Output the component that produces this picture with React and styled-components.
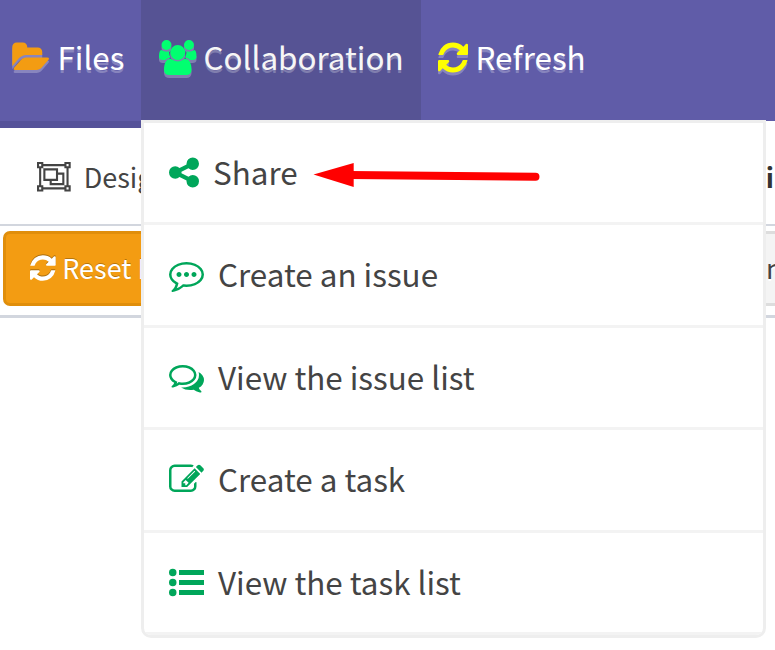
import React from "react";
import styled, { createGlobalStyle } from "styled-components";

const GlobalStyle = createGlobalStyle`
  * { box-sizing: border-box; }
  body { margin: 0; background: #fff; overflow: hidden; }
`;

const Page = styled.div`
  position: relative;
  width: 775px;
  height: 650px;
  overflow: hidden;
  background: #fff;
  color: #444;
  font-family: "Noto Sans CJK SC", "Open Sans", sans-serif;
`;

const NavBar = styled.nav`
  display: flex;
  height: 121px;
  background: #605ca8;
`;

const NavItem = styled.a`
  display: flex;
  align-items: flex-start;
  flex: none;
  width: ${(p) => p.$width}px;
  height: ${(p) => (p.$underline ? 128 : 121)}px;
  padding: 40px 0 0 ${(p) => p.$inset}px;
  gap: ${(p) => p.$gap}px;
  background: ${(p) => (p.$active ? "#565394" : "#605ca8")};
  border-bottom: ${(p) => (p.$underline ? "7px solid #555299" : "0")};
  color: ${(p) => (p.$active ? "#f6f6f6" : "#fff")};
  font-size: 31.4px;
  line-height: 33px;
  white-space: nowrap;
  text-shadow: 0 3px 0 rgba(255, 255, 255, 0.25);
  svg { filter: drop-shadow(0 3px 0 rgba(255, 255, 255, 0.25)); }
`;

const Glyph = styled.svg`
  display: block;
  flex: none;
  width: ${(p) => p.$w}px;
  height: ${(p) => p.$h}px;
  color: ${(p) => p.$color};
  fill: currentColor;
  overflow: visible;
`;

const TabRow = styled.div`
  display: flex;
  justify-content: space-between;
  height: 105px;
  padding: 41px 1px 0 37px;
  border-bottom: 2px solid #d2d6de;
`;

const Tab = styled.div`
  display: flex;
  gap: 13px;
  font-size: 27px;
  font-weight: ${(p) => (p.$bold ? 700 : 400)};
  color: ${(p) => (p.$bold ? "#333" : "#444")};
  line-height: 30px;
`;

const ActionRow = styled.div`
  display: flex;
  justify-content: space-between;
  height: 92px;
  padding: 5px 0 0 3px;
  border-bottom: 3px solid #d2d6de;
`;

const Button = styled.button`
  display: flex;
  align-items: flex-start;
  gap: 7px;
  width: ${(p) => p.$width}px;
  height: 75px;
  padding: 19px 0 0 ${(p) => p.$inset}px;
  border: 3px solid ${(p) => (p.$warning ? "#e08e0b" : "#ddd")};
  border-right-width: ${(p) => (p.$warning ? 3 : 0)}px;
  border-radius: ${(p) => (p.$warning ? "7px" : "7px 0 0 7px")};
  background: ${(p) => (p.$warning ? "#f39c12" : "#f4f4f4")};
  color: ${(p) => (p.$warning ? "#fff" : "#444")};
  font: 400 27px/30px "Noto Sans CJK SC", "Open Sans", sans-serif;
  white-space: nowrap;
  text-shadow: ${(p) => (p.$warning ? "0 -1px 0 rgba(0,0,0,.25)" : "0 2px 0 #fff")};
  svg { filter: drop-shadow(0 -1px 0 rgba(0, 0, 0, 0.3)); }
`;

const Menu = styled.ul`
  position: absolute;
  left: 141px;
  top: 120px;
  width: 625px;
  height: 518px;
  margin: 0;
  padding: 0;
  display: grid;
  grid-template-rows: repeat(5, 102.4px);
  list-style: none;
  background: #fff;
  border: 3px solid #eee;
  border-radius: 0 0 10px 10px;
  overflow: hidden;
`;

const MenuItem = styled.li`
  display: flex;
  align-items: flex-start;
  gap: 14.3px;
  padding: 32px 0 0 24.7px;
  border-bottom: 3px solid #f3f3f3;
  font-size: 31.4px;
  line-height: 33px;
  white-space: nowrap;
`;

const ArrowOverlay = styled.svg`
  position: absolute;
  left: 310px;
  top: 155px;
`;

const icons = {
  folder: { x: 0, w: 1943, d: "M1943 952q0 31-31 66l-336 396q-43 51-120.5 86.5t-143.5 35.5h-1088q-34 0-60.5-13t-26.5-43q0-31 31-66l336-396q43-51 120.5-86.5t143.5-35.5h1088q34 0 60.5 13t26.5 43zm-343-344v160h-832q-94 0-197 47.5t-164 119.5l-337 396-5 6q0-4-.5-12.5t-.5-12.5v-960q0-92 66-158t158-66h320q92 0 158 66t66 158v32h544q92 0 158 66t66 158z" },
  users: { x: 64, w: 1920, d: "M657 896q-162 5-265 128h-134q-82 0-138-40.5t-56-118.5q0-353 124-353 6 0 43.5 21t97.5 42.5 119 21.5q67 0 133-23-5 37-5 66 0 139 81 256zm1071 637q0 120-73 189.5t-194 69.5h-874q-121 0-194-69.5t-73-189.5q0-53 3.5-103.5t14-109 26.5-108.5 43-97.5 62-81 85.5-53.5 111.5-20q10 0 43 21.5t73 48 107 48 135 21.5 135-21.5 107-48 73-48 43-21.5q61 0 111.5 20t85.5 53.5 62 81 43 97.5 26.5 108.5 14 109 3.5 103.5zm-1024-1277q0 106-75 181t-181 75-181-75-75-181 75-181 181-75 181 75 75 181zm704 384q0 159-112.5 271.5t-271.5 112.5-271.5-112.5-112.5-271.5 112.5-271.5 271.5-112.5 271.5 112.5 112.5 271.5zm576 225q0 78-56 118.5t-138 40.5h-134q-103-123-265-128 81-117 81-256 0-29-5-66 66 23 133 23 59 0 119-21.5t97.5-42.5 43.5-21q124 0 124 353zm-128-609q0 106-75 181t-181 75-181-75-75-181 75-181 181-75 181 75 75 181z" },
  refresh: { x: 128, w: 1536, d: "M1639 1056q0 5-1 7-64 268-268 434.5t-478 166.5q-146 0-282.5-55t-243.5-157l-129 129q-19 19-45 19t-45-19-19-45v-448q0-26 19-45t45-19h448q26 0 45 19t19 45-19 45l-137 137q71 66 161 102t187 36q134 0 250-65t186-179q11-17 53-117 8-23 30-23h192q13 0 22.5 9.5t9.5 22.5zm25-800v448q0 26-19 45t-45 19h-448q-26 0-45-19t-19-45 19-45l138-138q-148-137-349-137-134 0-250 65t-186 179q-11 17-53 117-8 23-30 23h-199q-13 0-22.5-9.5t-9.5-22.5v-7q65-268 270-434.5t480-166.5q146 0 284 55.5t245 156.5l130-129q19-19 45-19t45 19 19 45z" },
  group: { x: 0, w: 2048, d: "M2048 384h-128v1024h128v384h-384v-128h-1280v128h-384v-384h128v-1024h-128v-384h384v128h1280v-128h384v384zm-256-256v128h128v-128h-128zm-1664 0v128h128v-128h-128zm128 1536v-128h-128v128h128zm1408-128v-128h128v-1024h-128v-128h-1280v128h-128v1024h128v128h1280zm256 128v-128h-128v128h128zM1280 640h384v768h-896v-256h-384v-768h896v256zm-768 384h640v-512h-640v512zm1024 256v-512h-256v384h-384v128h640z" },
  share: { x: 128, w: 1536, d: "M1344 1024q133 0 226.5 93.5t93.5 226.5-93.5 226.5-226.5 93.5-226.5-93.5-93.5-226.5q0-12 2-34l-360-180q-92 86-218 86-133 0-226.5-93.5t-93.5-226.5 93.5-226.5 226.5-93.5q126 0 218 86l360-180q-2-22-2-34 0-133 93.5-226.5t226.5-93.5 226.5 93.5 93.5 226.5-93.5 226.5-226.5 93.5q-126 0-218-86l-360 180q2 22 2 34t-2 34l360 180q92-86 218-86z" },
  comment: { x: 0, w: 1792, d: "M640 896q0 53-37.5 90.5t-90.5 37.5-90.5-37.5-37.5-90.5 37.5-90.5 90.5-37.5 90.5 37.5 37.5 90.5zm384 0q0 53-37.5 90.5t-90.5 37.5-90.5-37.5-37.5-90.5 37.5-90.5 90.5-37.5 90.5 37.5 37.5 90.5zm384 0q0 53-37.5 90.5t-90.5 37.5-90.5-37.5-37.5-90.5 37.5-90.5 90.5-37.5 90.5 37.5 37.5 90.5zm-512-512q-204 0-381.5 69.5t-282 187.5-104.5 255q0 112 71.5 213.5t201.5 175.5l87 50-27 96q-24 91-70 172 152-63 275-171l43-38 57 6q69 8 130 8 204 0 381.5-69.5t282-187.5 104.5-255-104.5-255-282-187.5-381.5-69.5zm896 512q0 174-120 321.5t-326 233-450 85.5q-70 0-145-8-198 175-460 242-49 14-114 22h-5q-15 0-27-10.5t-16-27.5v-1q-3-4-.5-12t2-10 4.5-9.5l6-9 7-8.5 8-9q7-8 31-34.5t34.5-38 31-39.5 32.5-51 27-59 26-76q-157-89-247.5-220t-90.5-281q0-174 120-321.5t326-233 450-85.5 450 85.5 326 233 120 321.5z" },
  comments: { x: 0, w: 1792, d: "M704 384q-153 0-286 52t-211.5 141-78.5 191q0 82 53 158t149 132l97 56-35 84q34-20 62-39l44-31 53 10q78 14 153 14 153 0 286-52t211.5-141 78.5-191-78.5-191-211.5-141-286-52zm0-128q191 0 353.5 68.5t256.5 186.5 94 257-94 257-256.5 186.5-353.5 68.5q-86 0-176-16-124 88-278 128-36 9-86 16h-3q-11 0-20.5-8t-11.5-21q-1-3-1-6.5t.5-6.5 2-6l2.5-5 3.5-5.5 4-5 4.5-5 4-4.5q5-6 23-25t26-29.5 22.5-29 25-38.5 20.5-44q-124-72-195-177t-71-224q0-139 94-257t256.5-186.5 353.5-68.5zm822 1169q10 24 20.5 44t25 38.5 22.5 29 26 29.5 23 25q1 1 4 4.5t4.5 5 4 5 3.5 5.5l2.5 5 2 6 .5 6.5-1 6.5q-3 14-13 22t-22 7q-50-7-86-16-154-40-278-128-90 16-176 16-271 0-472-132 58 4 88 4 161 0 309-45t264-129q125-92 192-212t67-254q0-77-23-152 129 71 204 178t75 230q0 120-71 224.5t-195 176.5z" },
  edit: { x: 0, w: 1792, d: "M888 1184l116-116-152-152-116 116v56h96v96h56zm440-720q-16-16-33 1l-350 350q-17 17-1 33t33-1l350-350q17-17 1-33zm80 594v190q0 119-84.5 203.5t-203.5 84.5h-832q-119 0-203.5-84.5t-84.5-203.5v-832q0-119 84.5-203.5t203.5-84.5h832q63 0 117 25 15 7 18 23 3 17-9 29l-49 49q-14 14-32 8-23-6-45-6h-832q-66 0-113 47t-47 113v832q0 66 47 113t113 47h832q66 0 113-47t47-113v-126q0-13 9-22l64-64q15-15 35-7t20 29zm-96-738l288 288-672 672h-288v-288zm444 132l-92 92-288-288 92-92q28-28 68-28t68 28l152 152q28 28 28 68t-28 68z" },
  list: { x: 0, w: 1792, d: "M384 1408a192 192 0 1 1-384 0a192 192 0 1 1 384 0zM384 896a192 192 0 1 1-384 0a192 192 0 1 1 384 0zM384 384a192 192 0 1 1-384 0a192 192 0 1 1 384 0zM512 1280h1280v256h-1280zM512 768h1280v256h-1280zM512 256h1280v256h-1280z" },
};

function Icon({ name, size = 35, color = "currentColor" }) {
  const { x, w, d } = icons[name];
  return (
    <Glyph $w={(w / 1792) * size} $h={size} $color={color} viewBox={`${x} 0 ${w} 1792`} aria-hidden="true">
      <path d={d} />
    </Glyph>
  );
}

const menuItems = [
  ["share", "Share"],
  ["comment", "Create an issue"],
  ["comments", "View the issue list"],
  ["edit", "Create a task"],
  ["list", "View the task list"],
];

export default function App() {
  return (
    <Page>
      <GlobalStyle />
      <NavBar>
        <NavItem $width={141} $inset={11} $gap={8.5} $underline>
          <Icon name="folder" color="#f39c12" />
          <span>Files</span>
        </NavItem>
        <NavItem $width={280} $inset={18} $gap={7} $active>
          <Icon name="users" color="#01ff70" />
          <span>Collaboration</span>
        </NavItem>
        <NavItem $width={354} $inset={17} $gap={7.5}>
          <Icon name="refresh" color="#ffff00" />
          <span>Refresh</span>
        </NavItem>
      </NavBar>
      <TabRow>
        <Tab>
          <Icon name="group" size={29.5} />
          <span>Design</span>
        </Tab>
        <Tab $bold>i</Tab>
      </TabRow>
      <ActionRow>
        <Button $width={180} $inset={23.5} $warning>
          <Icon name="refresh" size={30} />
          <span>Reset L</span>
        </Button>
        <Button $width={40} $inset={28}>n</Button>
      </ActionRow>
      <Menu>
        {menuItems.map(([icon, label]) => (
          <MenuItem key={label}>
            <Icon name={icon} color="#00a65a" />
            <span>{label}</span>
          </MenuItem>
        ))}
      </Menu>
      <ArrowOverlay width="235" height="40" viewBox="310 155 235 40">
        <path d="M350 175L535.5 176.7" stroke="#f00" strokeWidth="8" strokeLinecap="round" />
        <path d="M313.5 174.5L353.7 163V187Z" fill="#f00" />
      </ArrowOverlay>
    </Page>
  );
}
